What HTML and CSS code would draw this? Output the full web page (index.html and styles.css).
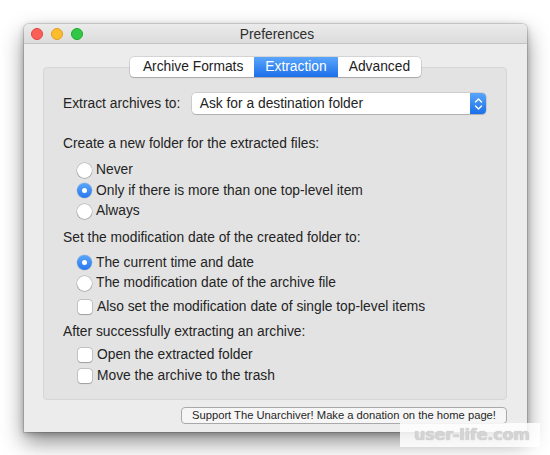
FILE: index.html
```html
<!DOCTYPE html>
<html>
<head>
<meta charset="utf-8">
<link rel="stylesheet" href="styles.css">
</head>
<body>
<div class="desk">
  <div class="window">
    <div class="titlebar">
      <div class="lights">
        <span class="light red"></span>
        <span class="light yellow"></span>
        <span class="light green"></span>
      </div>
      <div class="title">Preferences</div>
    </div>
    <div class="content">
      <div class="tabs">
        <div class="tab">Archive Formats</div>
        <div class="tab active">Extraction</div>
        <div class="tab">Advanced</div>
      </div>
      <div class="panel">
        <div class="row-popup">
          <span class="label">Extract archives to:</span>
          <div class="popup">
            <span class="popup-text">Ask for a destination folder</span>
            <span class="popup-arrows">
              <svg width="9" height="14" viewBox="0 0 9 14"><path d="M1.5 5 L4.5 2 L7.5 5 M1.5 9 L4.5 12 L7.5 9" fill="none" stroke="#fff" stroke-width="1.4" stroke-linecap="round" stroke-linejoin="round"/></svg>
            </span>
          </div>
        </div>

        <div class="heading h1">Create a new folder for the extracted files:</div>
        <div class="group g1">
          <div class="opt"><span class="radio"></span>Never</div>
          <div class="opt"><span class="radio on"></span>Only if there is more than one top-level item</div>
          <div class="opt"><span class="radio"></span>Always</div>
        </div>

        <div class="heading h2">Set the modification date of the created folder to:</div>
        <div class="group">
          <div class="opt"><span class="radio on"></span>The current time and date</div>
          <div class="opt"><span class="radio"></span>The modification date of the archive file</div>
          <div class="opt check-row"><span class="check"></span>Also set the modification date of single top-level items</div>
        </div>

        <div class="heading h3">After successfully extracting an archive:</div>
        <div class="group g3">
          <div class="opt"><span class="check"></span>Open the extracted folder</div>
          <div class="opt"><span class="check"></span>Move the archive to the trash</div>
        </div>
      </div>
      <div class="footer">
        <div class="button">Support The Unarchiver! Make a donation on the home page!</div>
      </div>
    </div>
  </div>
  <div class="watermark">user-life.com</div>
</div>
</body>
</html>
```

FILE: styles.css
```css
* { box-sizing: border-box; }
html, body {
  margin: 0;
  padding: 0;
  background: #ffffff;
  width: 550px;
  height: 455px;
  overflow: hidden;
}
body {
  font-family: "Liberation Sans", Arial, sans-serif;
  color: #242424;
}
.desk {
  position: relative;
  width: 550px;
  height: 455px;
  padding: 24px 0 0 24px;
}
.window {
  width: 503px;
  height: 408px;
  background: #ececec;
  border-radius: 5px 5px 0 0;
  box-shadow: 0 0 0 1px rgba(0,0,0,0.12), 0 10px 22px rgba(0,0,0,0.45), 0 2px 6px rgba(0,0,0,0.25);
  display: flex;
  flex-direction: column;
}
.titlebar {
  height: 20px;
  background: linear-gradient(#ebebeb, #dcdcdc);
  border-bottom: 1px solid #c4c4c4;
  border-radius: 5px 5px 0 0;
  display: flex;
  align-items: center;
}
.lights {
  display: flex;
  gap: 8px;
  padding-left: 7px;
  margin-top: 1px;
}
.light {
  width: 12px;
  height: 12px;
  border-radius: 50%;
  display: block;
}
.red { background: #fc5f57; border: 0.5px solid #e0443e; }
.yellow { background: #fdbc2e; border: 0.5px solid #dea123; }
.green { background: #33c748; border: 0.5px solid #1aab29; }
.title {
  flex: 1;
  text-align: center;
  font-size: 13.8px;
  color: #2e2e2e;
  margin-left: -56px;
  margin-top: 1px;
}
.content {
  flex: 1;
  padding: 13px 20px 0 19px;
  display: flex;
  flex-direction: column;
}
.tabs {
  display: flex;
  align-self: center;
  margin-left: 1px;
  height: 20px;
  background: #ffffff;
  border-radius: 4px;
  box-shadow: 0 0 0 0.5px rgba(0,0,0,0.2), 0 1px 1px rgba(0,0,0,0.18);
  position: relative;
  z-index: 1;
}
.tab {
  font-size: 13.8px;
  line-height: 20px;
  padding: 0 11px;
  color: #222;
}
.tab:first-child { padding: 0 11px 0 13px; }
.tab.active {
  background: linear-gradient(#5aa6fb, #1b6fe9);
  color: #ffffff;
}
.panel {
  margin-top: -10px;
  height: 333px;
  background: #e3e3e3;
  border: 1px solid #d6d6d6;
  border-radius: 4px;
  padding: 25px 20px 0 19px;
}
.row-popup {
  display: flex;
  align-items: center;
  height: 21px;
}
.label {
  font-size: 13.8px;
  width: 129px;
}
.popup {
  width: 295px;
  height: 21px;
  background: #ffffff;
  border-radius: 4px;
  box-shadow: 0 0 0 0.5px rgba(0,0,0,0.18), 0 1px 1px rgba(0,0,0,0.15);
  display: flex;
  align-items: center;
}
.popup-text {
  flex: 1;
  font-size: 13.8px;
  padding-left: 8px;
}
.popup-arrows {
  width: 16px;
  height: 21px;
  background: linear-gradient(#5aa6fb, #1b6fe9);
  border-radius: 0 4px 4px 0;
  display: flex;
  align-items: center;
  justify-content: center;
}
.heading {
  font-size: 13.8px;
  line-height: 20px;
}
.h1 { margin-top: 20px; }
.h2 { margin-top: 6px; }
.h3 { margin-top: 5px; }
.group {
  padding-left: 14px;
  margin-top: 5px;
}
.g1 { margin-top: 6px; }
.g3 { margin-top: 3px; }
.opt {
  display: flex;
  align-items: center;
  font-size: 13.8px;
  line-height: 20.5px;
  height: 20.5px;
}
.check-row { margin-top: 3px; }
.radio {
  width: 15px;
  height: 15px;
  border-radius: 50%;
  background: #ffffff;
  box-shadow: 0 0 0 0.5px rgba(0,0,0,0.25), 0 0.5px 1px rgba(0,0,0,0.2);
  margin-right: 4px;
  flex: none;
  position: relative;
}
.radio.on {
  background: linear-gradient(#5aa6fb, #2778ee);
  box-shadow: 0 0 0 0.5px rgba(0,0,0,0.15);
}
.radio.on::after {
  content: "";
  position: absolute;
  left: 5px;
  top: 5px;
  width: 5px;
  height: 5px;
  border-radius: 50%;
  background: #ffffff;
}
.check {
  width: 14px;
  height: 14px;
  border-radius: 3px;
  background: #ffffff;
  box-shadow: 0 0 0 0.5px rgba(0,0,0,0.25), 0 0.5px 1px rgba(0,0,0,0.2);
  margin-right: 5px;
  margin-left: 1px;
  flex: none;
}
.footer {
  display: flex;
  justify-content: flex-end;
  padding-top: 7px;
}
.button {
  width: 326px;
  height: 17px;
  border: 1px solid #a9a9a9;
  border-radius: 4px;
  background: #f6f6f6;
  font-size: 11.2px;
  line-height: 15px;
  text-align: center;
  color: #262626;
}
.watermark {
  position: absolute;
  left: 400px;
  top: 423px;
  width: 140px;
  height: 24px;
  background: rgba(255,255,255,0.85);
  font-family: "DejaVu Sans", sans-serif;
  font-weight: bold;
  font-size: 16px;
  line-height: 24px;
  color: #d4d4d4;
  text-shadow: 0 0 1px #b5b5b5;
  padding-left: 14px;
  white-space: nowrap;
  letter-spacing: -0.2px;
}
```
